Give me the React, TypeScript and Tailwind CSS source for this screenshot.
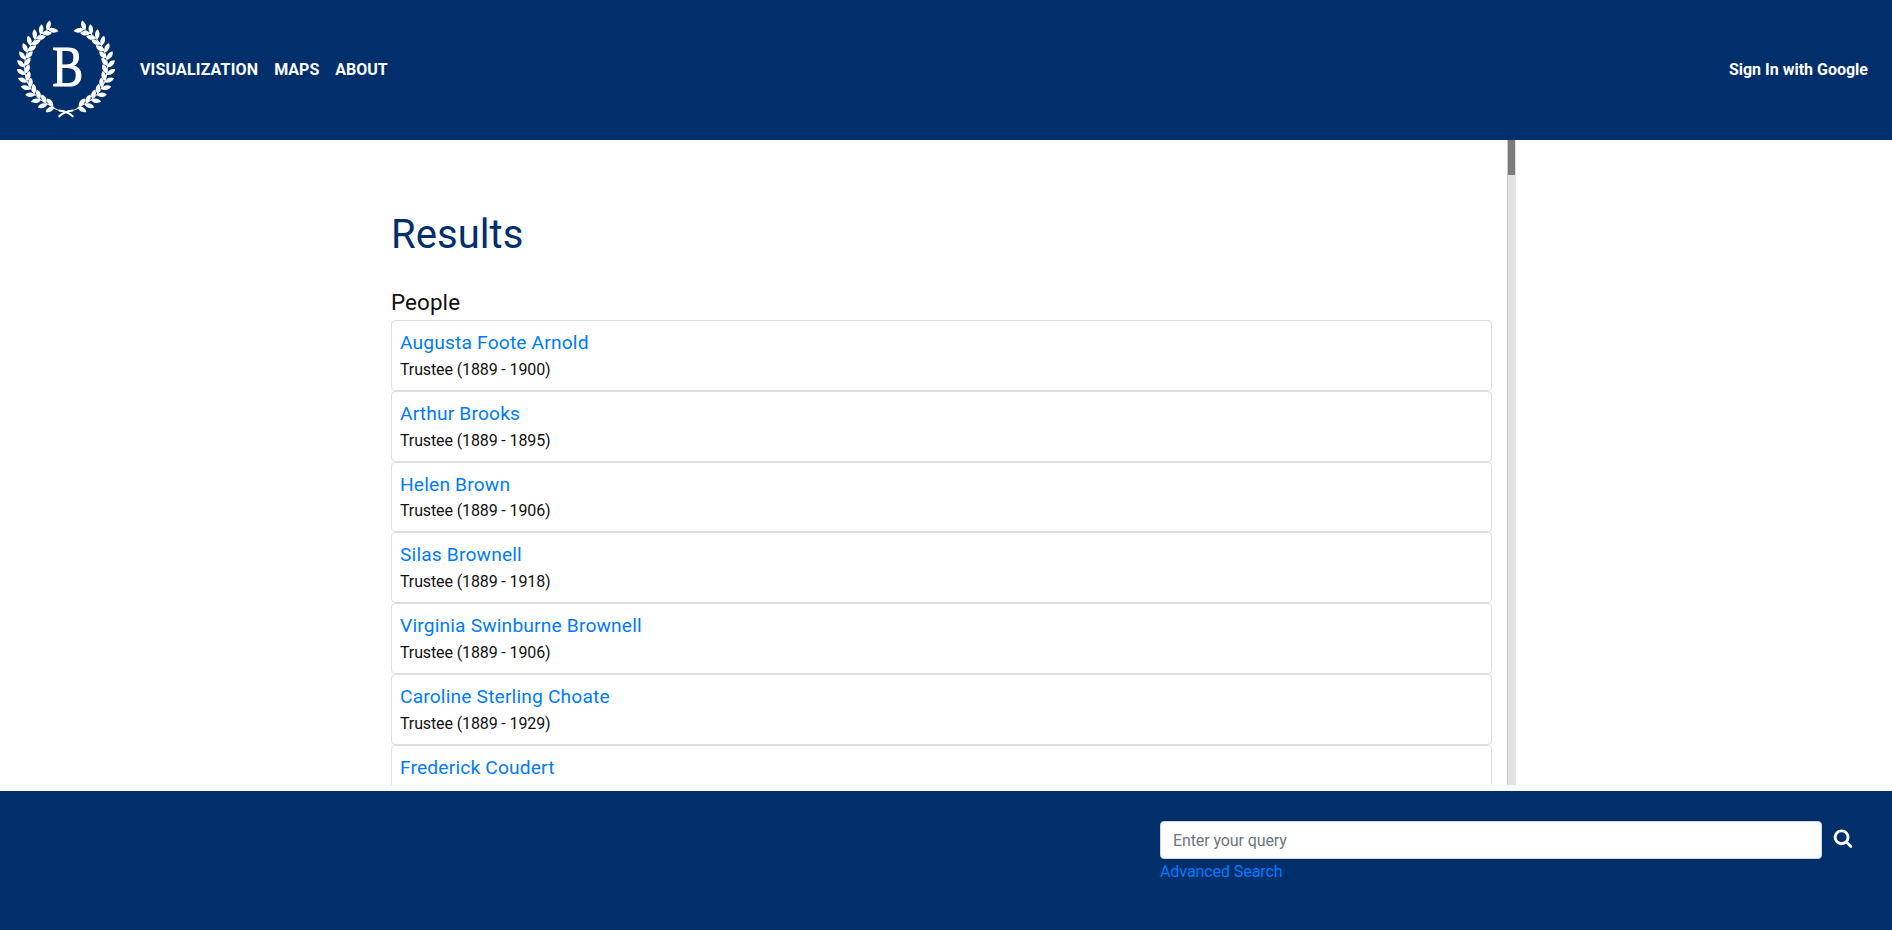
const people = [
  { name: 'Augusta Foote Arnold', role: 'Trustee (1889 - 1900)' },
  { name: 'Arthur Brooks', role: 'Trustee (1889 - 1895)' },
  { name: 'Helen Brown', role: 'Trustee (1889 - 1906)' },
  { name: 'Silas Brownell', role: 'Trustee (1889 - 1918)' },
  { name: 'Virginia Swinburne Brownell', role: 'Trustee (1889 - 1906)' },
  { name: 'Caroline Sterling Choate', role: 'Trustee (1889 - 1929)' },
  { name: 'Frederick Coudert', role: '' },
];

const LEAF = 'M0 0C-2.2 -2 -3.7 -6.4 -0.4 -10.2C3.2 -7.4 2.8 -2.6 0 0Z';
const NODES = Array.from({ length: 14 }, (_, i) => 16 + i * 10.5);

function Branch() {
  return (
    <g>
      {NODES.map((deg) => (
        <g key={deg} transform={`translate(50 51) rotate(${deg}) translate(0 41.5) rotate(-90)`}>
          <path d={LEAF} transform="rotate(-43)" />
          <path d={LEAF} transform="translate(0 -1.5) rotate(38)" />
        </g>
      ))}
      <path
        d="M57.3 100.8C53 96.5 50 95.2 44 94.6C41 94 37 92 34 89.3A41.5 41.5 0 0 1 36 12"
        fill="none"
        stroke="currentColor"
        strokeWidth="1"
      />
      <path d="M57.3 100.8C54 97.5 51 95.5 43 94.6" fill="none" stroke="currentColor" strokeWidth="2" />
    </g>
  );
}

function Logo() {
  return (
    <svg viewBox="0 0 100 108" className="h-[108px] w-[100px] text-white" fill="currentColor">
      <Branch />
      <g transform="translate(100 0) scale(-1 1)">
        <Branch />
      </g>
      <text
        x="0"
        y="0"
        transform="translate(36.3 69.6) scale(0.8 1)"
        fontFamily="Liberation Serif, serif"
        fontSize="58"
        fontWeight="400"
        stroke="currentColor"
        strokeWidth="1.1"
      >
        B
      </text>
    </svg>
  );
}

function SearchIcon() {
  return (
    <svg viewBox="0 0 1792 1792" className="size-5 text-white" fill="currentColor">
      <path d="M1216 832q0-185-131.5-316.5t-316.5-131.5-316.5 131.5-131.5 316.5 131.5 316.5 316.5 131.5 316.5-131.5 131.5-316.5zm512 832q0 52-38 90t-90 38q-54 0-90-38l-343-342q-179 124-399 124-143 0-273.5-55.5t-225-150-150-225-55.5-273.5 55.5-273.5 150-225 225-150 273.5-55.5 273.5 55.5 225 150 150 225 55.5 273.5q0 220-124 399l343 343q37 37 37 90z" />
    </svg>
  );
}

export default function App() {
  return (
    <div className="flex h-screen flex-col overflow-hidden bg-white font-['Roboto',sans-serif] text-base text-[#111]">
      <header className="flex h-[140px] shrink-0 items-center bg-[#002f6c] pr-6 pl-4 font-bold text-white">
        <Logo />
        <nav className="ml-6 flex gap-4">
          <a href="#" className="tracking-[0.17px]">VISUALIZATION</a>
          <a href="#">MAPS</a>
          <a href="#">ABOUT</a>
        </nav>
        <a href="#" className="ml-auto">
          Sign In with Google
        </a>
      </header>

      <main className="ml-[376px] flex h-[645px] w-[1140px] shrink-0 overflow-hidden">
        <div className="w-[1131px] shrink-0 px-[15px]">
          <h1 className="mt-[71px] text-[40px] leading-[48px] tracking-[0.05px] text-[#002f6c]">Results</h1>
          <h2 className="mt-[30px] text-[22.4px] leading-[27px] tracking-[0.1px]">People</h2>
          <div className="mt-1">
            {people.map((p) => (
              <div key={p.name} className="h-[70.8px] w-[1101px] rounded border border-[#dfdfdf] p-2">
                <a href="#" className="block text-[19.2px] leading-[28.8px] tracking-[0.17px] text-[#007bff]">
                  {p.name}
                </a>
                {p.role && <p className="leading-6 tracking-[-0.12px]">{p.role}</p>}
              </div>
            ))}
          </div>
        </div>
        <div className="w-[9px] shrink-0 border-l border-[#cbcbcb] bg-[#e2e2e2]">
          <div className="h-[35px] w-[7px] bg-[#7b7b7b]" />
        </div>
      </main>

      <footer className="mt-1.5 flex flex-1 justify-end bg-[#002f6c] pt-[30px] pr-[39px]">
        <div className="w-[662px]">
          <input
            type="text"
            placeholder="Enter your query"
            className="block h-[38px] w-full rounded border border-[#ced4da] bg-white px-3 py-1.5 tracking-[-0.1px] placeholder:text-[#6c757d]"
          />
          <a href="#" className="mt-px block leading-6 tracking-[-0.07px] text-[#007bff]">
            Advanced Search
          </a>
        </div>
        <button type="button" aria-label="Search" className="mt-[7px] ml-[11px] size-5">
          <SearchIcon />
        </button>
      </footer>
    </div>
  );
}
